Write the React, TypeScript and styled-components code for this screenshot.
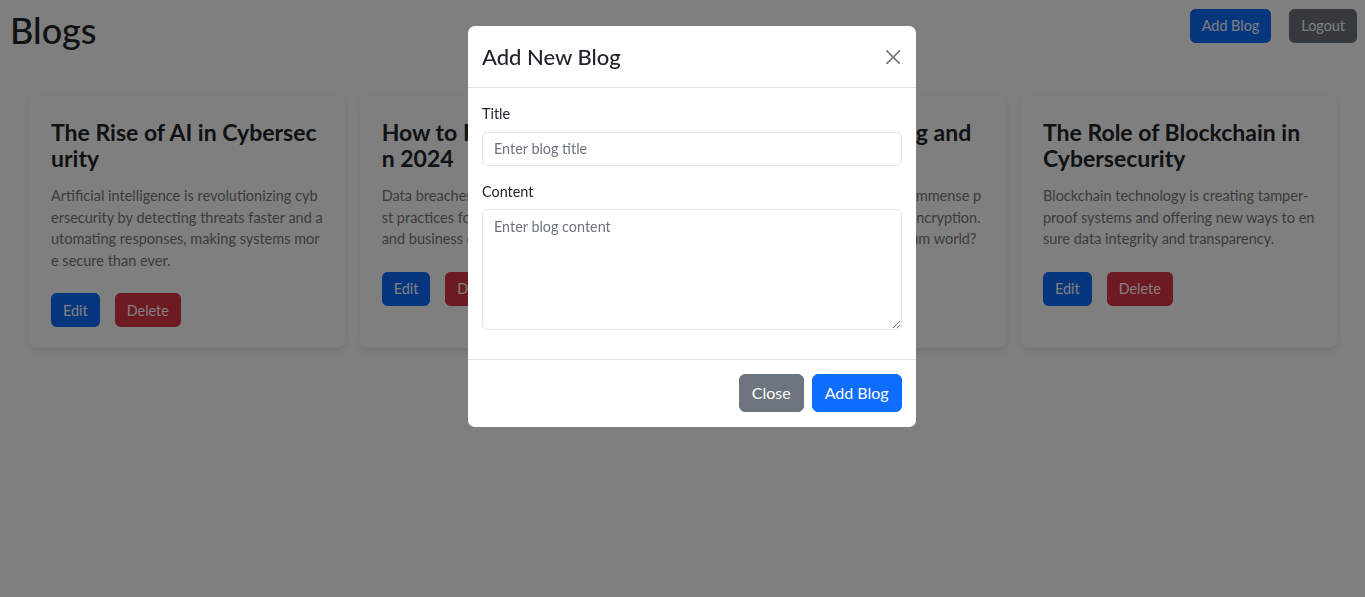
import React from "react";
import styled, { createGlobalStyle } from "styled-components";

const GlobalStyle = createGlobalStyle`
  html, body { margin: 0; padding: 0; background: #fff; }
  body {
    font-family: Lato, "Liberation Sans", sans-serif;
    color: #212529;
    font-size: 14.4px;
    line-height: 1.5;
    overflow: hidden;
  }
  * { box-sizing: border-box; }
`;

const Page = styled.div`
  min-height: 597px;
`;

const Header = styled.header`
  display: flex;
  justify-content: space-between;
  align-items: flex-start;
  padding: 9px 8px 0 10px;
`;

const PageTitle = styled.h1`
  margin: 0;
  font-size: 36px;
  font-weight: 500;
  line-height: 43px;
`;

const Actions = styled.div`
  display: flex;
  gap: 18px;
`;

const palette = {
  primary: "#0d6efd",
  secondary: "#6c757d",
  danger: "#dc3545",
};

type Variant = keyof typeof palette;

const Button = styled.button<{ $variant: Variant; $size?: "sm" | "md" }>`
  font-family: inherit;
  font-weight: 400;
  color: #fff;
  background: ${(p) => palette[p.$variant]};
  border: 1px solid ${(p) => palette[p.$variant]};
  border-radius: ${(p) => (p.$size === "md" ? "6px" : "5.4px")};
  font-size: ${(p) => (p.$size === "md" ? "16px" : "14.4px")};
  line-height: ${(p) => (p.$size === "md" ? "24px" : "21.6px")};
  padding: ${(p) => (p.$size === "md" ? "6px 12px" : "5.2px 11px")};
  cursor: pointer;
`;

const Grid = styled.main`
  display: grid;
  grid-template-columns: repeat(4, 1fr);
  column-gap: 14.67px;
  padding: 0 28px 0 29px;
  margin-top: 44px;
`;

const Card = styled.article`
  background: #fff;
  border-radius: 8px;
  box-shadow: 0 3px 8px rgba(0, 0, 0, 0.1);
  padding: 23px 22px 21px;
  word-break: break-all;
`;

const CardTitle = styled.h2`
  margin: 0 0 14px;
  font-size: 23px;
  font-weight: 700;
  line-height: 26px;
`;

const CardText = styled.p`
  margin: 0 0 22px;
  color: #777;
  font-size: 14.5px;
  line-height: 21.6px;
`;

const CardActions = styled.div`
  display: flex;
  gap: 15px;
`;

const Backdrop = styled.div`
  position: fixed;
  inset: 0;
  background: rgba(0, 0, 0, 0.5);
`;

const ModalLayer = styled.div`
  position: fixed;
  inset: 0;
  display: flex;
  justify-content: center;
  align-items: flex-start;
  padding: 26px 0 0 19px;
`;

const Modal = styled.div`
  width: 448px;
  background: #fff;
  border-radius: 7px;
  overflow: hidden;
`;

const ModalHeader = styled.div`
  display: flex;
  align-items: center;
  justify-content: space-between;
  padding: 15px 14px 14px 14px;
  border-bottom: 1px solid #dee2e6;
`;

const ModalTitle = styled.h5`
  margin: 0;
  font-size: 22px;
  font-weight: 500;
  line-height: 32px;
`;

const CloseX = styled.button`
  display: flex;
  align-items: center;
  justify-content: center;
  width: 16px;
  height: 16px;
  padding: 0;
  margin-right: 1px;
  border: 0;
  background: transparent;
  color: #000;
  opacity: 0.5;
  cursor: pointer;
`;

const ModalBody = styled.div`
  padding: 15px 14.4px 14.4px 14px;
`;

const Field = styled.div`
  margin-bottom: 14.4px;
`;

const Label = styled.label`
  display: block;
  margin-bottom: 7.2px;
  font-size: 14.4px;
  line-height: 21.6px;
`;

const inputBase = `
  display: block;
  width: 100%;
  font-family: inherit;
  font-size: 14.4px;
  line-height: 21.6px;
  color: #212529;
  background: #fff;
  border: 1px solid #dee2e6;
  border-radius: 5.4px;
  padding: 5.4px 11px;
  &::placeholder { color: #6c757d; opacity: 1; }
`;

const TextInput = styled.input`
  ${inputBase}
`;

const TextArea = styled.textarea`
  ${inputBase}
  resize: vertical;
`;

const ModalFooter = styled.div`
  display: flex;
  justify-content: flex-end;
  gap: 8px;
  padding: 14.4px;
  border-top: 1px solid #dee2e6;
`;

const blogs = [
  {
    title: "The Rise of AI in Cybersecurity",
    text: "Artificial intelligence is revolutionizing cybersecurity by detecting threats faster and automating responses, making systems more secure than ever.",
  },
  {
    title: "How to Protect Our Data in 2024",
    text: "Data breaches are increasing. Learn the best practices for safeguarding your personal and business data.",
  },
  {
    title: "Quantum Computing and Cybersecurity",
    text: "Quantum computing holds real immense potential yet it threatens classic encryption. How do we prepare for a quantum world?",
  },
  {
    title: "The Role of Blockchain in Cybersecurity",
    text: "Blockchain technology is creating tamper-proof systems and offering new ways to ensure data integrity and transparency.",
  },
];

const XIcon = () => (
  <svg width="14.4" height="14.4" viewBox="0 0 16 16" fill="currentColor" aria-hidden="true">
    <path d="M.293.293a1 1 0 0 1 1.414 0L8 6.586 14.293.293a1 1 0 1 1 1.414 1.414L9.414 8l6.293 6.293a1 1 0 0 1-1.414 1.414L8 9.414l-6.293 6.293a1 1 0 0 1-1.414-1.414L6.586 8 .293 1.707a1 1 0 0 1 0-1.414" />
  </svg>
);

export default function App() {
  return (
    <>
      <GlobalStyle />
      <Page>
        <Header>
          <PageTitle>Blogs</PageTitle>
          <Actions>
            <Button $variant="primary">Add Blog</Button>
            <Button $variant="secondary">Logout</Button>
          </Actions>
        </Header>
        <Grid>
          {blogs.map((b) => (
            <Card key={b.title}>
              <CardTitle>{b.title}</CardTitle>
              <CardText>{b.text}</CardText>
              <CardActions>
                <Button $variant="primary">Edit</Button>
                <Button $variant="danger">Delete</Button>
              </CardActions>
            </Card>
          ))}
        </Grid>
      </Page>
      <Backdrop />
      <ModalLayer>
        <Modal role="dialog" aria-modal="true">
          <ModalHeader>
            <ModalTitle>Add New Blog</ModalTitle>
            <CloseX aria-label="Close">
              <XIcon />
            </CloseX>
          </ModalHeader>
          <ModalBody>
            <Field>
              <Label htmlFor="title">Title</Label>
              <TextInput id="title" placeholder="Enter blog title" />
            </Field>
            <Field>
              <Label htmlFor="content">Content</Label>
              <TextArea id="content" rows={5} placeholder="Enter blog content" />
            </Field>
          </ModalBody>
          <ModalFooter>
            <Button $variant="secondary" $size="md">Close</Button>
            <Button $variant="primary" $size="md">Add Blog</Button>
          </ModalFooter>
        </Modal>
      </ModalLayer>
    </>
  );
}
